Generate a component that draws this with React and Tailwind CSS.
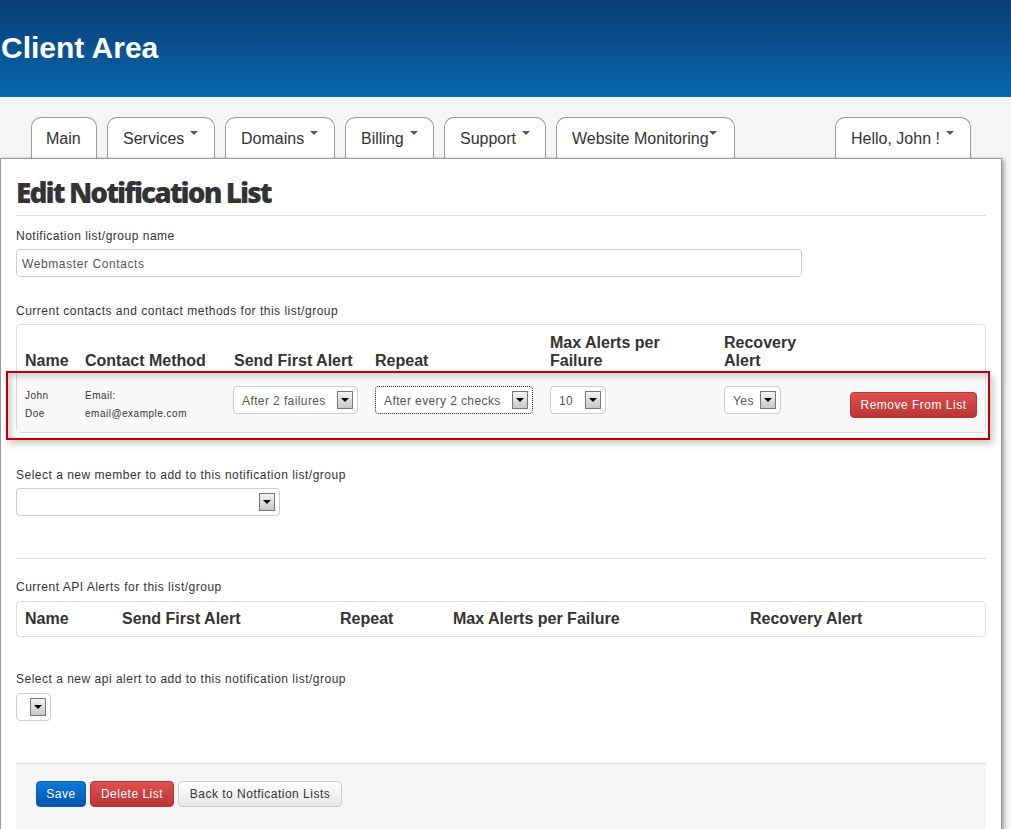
import React from "react";

const tabs = [
  { label: "Main", width: "w-[66px]", left: "pl-[14px]" },
  { label: "Services", width: "w-[108px]", left: "pl-[15px]", caret: "ml-[6px]" },
  { label: "Domains", width: "w-[110px]", left: "pl-[15px]", caret: "ml-[6px]" },
  { label: "Billing", width: "w-[89px]", left: "pl-[15px]", caret: "ml-[6px]" },
  { label: "Support", width: "w-[102px]", left: "pl-[15px]", caret: "ml-[6px]" },
  { label: "Website Monitoring", width: "w-[179px]", left: "pl-[15px]", caret: "ml-0" },
];

function Tab({ label, width, left, caret }) {
  return (
    <a className={`flex h-[41px] items-start rounded-t-[10px] border border-b-0 border-[#999] bg-white pt-[10px] text-base leading-[22px] text-[#333] ${width} ${left}`}>
      <span className="whitespace-nowrap">{label}</span>
      {caret ? (
        <span className={`mt-[3px] h-0 w-0 border-x-4 border-t-4 border-x-transparent border-t-[#555] ${caret}`} />
      ) : null}
    </a>
  );
}

function FakeSelect({ value, width, className = "", dotted = false }) {
  return (
    <div className={`relative h-[28px] rounded-[4px] border bg-white pl-[8px] text-xs leading-[28px] tracking-[0.4px] text-[#555] ${dotted ? "border-dotted border-[#222]" : "border-[#ccc]"} ${width} ${className}`}>
      <span className="whitespace-nowrap">{value}</span>
      <span className="absolute right-[4px] top-[4px] flex h-[18px] w-[16px] items-center justify-center border border-[#777] bg-gradient-to-b from-[#f3f3f3] to-[#c8c8c8]">
        <span className="h-0 w-0 border-x-4 border-t-[4px] border-x-transparent border-t-black" />
      </span>
    </div>
  );
}

function Label({ children, className = "" }) {
  return <div className={`text-xs leading-[18px] tracking-[0.5px] text-[#333] ${className}`}>{children}</div>;
}

function Button({ children, className }) {
  return (
    <button className={`h-[26px] rounded-[4px] border text-xs tracking-[0.5px] ${className}`}>{children}</button>
  );
}

export default function App() {
  return (
    <div className="h-[829px] w-[1011px] overflow-hidden bg-[#f5f5f5] font-['Liberation_Sans',Arial,sans-serif]">
      <header className="h-[97px] bg-gradient-to-b from-[#0a3d76] to-[#0668ac] pl-px pt-[30px]">
        <h1 className="text-[30px] font-bold leading-[36px] text-white">Client Area</h1>
      </header>

      <nav className="flex h-[61px] items-end pl-[31px] pr-[40px]">
        <div className="flex gap-[10px]">
          {tabs.map((tab) => (
            <Tab key={tab.label} {...tab} />
          ))}
        </div>
        <div className="ml-auto">
          <Tab label="Hello, John !" width="w-[136px]" left="pl-[15px]" caret="ml-[6px]" />
        </div>
      </nav>

      <main className="relative h-[680px] w-[1002px] border border-[#999] bg-white px-[15px] shadow-[2px_1px_4px_rgba(0,0,0,0.35)]">
        <div className="border-b border-[#ddd] pb-[5px] pt-[15px]">
          <h2 className="font-['Open_Sans',sans-serif] text-[28px] font-extrabold leading-[36px] tracking-[-1.95px] text-[#333]">Edit Notification List</h2>
        </div>

        <Label className="mt-[11px]">Notification list/group name</Label>
        <input
          readOnly
          value="Webmaster Contacts"
          className="mt-[4px] block h-[28px] w-[786px] rounded-[4px] border border-[#ccc] px-[5px] pt-px text-xs tracking-[0.6px] text-[#555] outline-none"
        />

        <Label className="mt-[25px]">Current contacts and contact methods for this list/group</Label>

        <div className="relative mt-[4px] w-[970px] rounded-[4px] border border-[#ddd]">
          <table className="w-full table-fixed border-collapse text-left text-[#333]">
            <colgroup>
              <col className="w-[60px]" />
              <col className="w-[149px]" />
              <col className="w-[141px]" />
              <col className="w-[175px]" />
              <col className="w-[174px]" />
              <col className="w-[110px]" />
              <col />
            </colgroup>
            <thead>
              <tr className="h-[52px] align-bottom text-base font-bold leading-[18px]">
                <th className="pb-[7px] pl-[8px]">Name</th>
                <th className="pb-[7px] pl-[8px]">Contact Method</th>
                <th className="pb-[7px] pl-[8px]">Send First Alert</th>
                <th className="pb-[7px] pl-[8px]">Repeat</th>
                <th className="pb-[7px] pl-[8px]">Max Alerts per Failure</th>
                <th className="pb-[7px] pl-[8px]">Recovery Alert</th>
                <th />
              </tr>
            </thead>
            <tbody>
              <tr className="h-[55px] bg-[#f9f9f9] align-top text-[10px] leading-[18px] tracking-[0.5px]">
                <td className="pl-[8px] pt-[10px]">
                  John
                  <br />
                  Doe
                </td>
                <td className="pl-[8px] pt-[10px]">
                  Email:
                  <br />
                  email@example.com
                </td>
                <td className="pl-[8px] pt-[9px]">
                  <FakeSelect value="After 2 failures" width="w-[125px]" className="-ml-px" />
                </td>
                <td className="pl-[8px] pt-[9px]">
                  <FakeSelect value="After every 2 checks" width="w-[158px]" dotted />
                </td>
                <td className="pl-[8px] pt-[9px]">
                  <FakeSelect value="10" width="w-[56px]" />
                </td>
                <td className="pl-[8px] pt-[9px]">
                  <FakeSelect value="Yes" width="w-[57px]" />
                </td>
                <td className="pr-[8px] pt-[15px] text-right">
                  <Button className="w-[127px] border-[#b33] bg-gradient-to-b from-[#e05050] to-[#b93434] text-white">
                    Remove From List
                  </Button>
                </td>
              </tr>
            </tbody>
          </table>

          {/* red annotation drawn over the row in the screenshot */}
          <div className="pointer-events-none absolute bottom-[-8px] left-[-11px] right-[-5px] top-[46px] border-2 border-[#c00000] shadow-[3px_4px_7px_rgba(0,0,0,0.22),inset_3px_3px_7px_rgba(0,0,0,0.22)]" />
        </div>

        <Label className="mt-[33px]">Select a new member to add to this notification list/group</Label>
        <div className="mt-[4px]">
          <FakeSelect value="" width="w-[264px]" />
        </div>

        <div className="mt-[42px] border-t border-[#ddd]" />

        <Label className="mt-[19px]">Current API Alerts for this list/group</Label>
        <div className="mt-[5px] flex h-[36px] w-[970px] items-center rounded-[4px] border border-[#ddd] text-base font-bold text-[#333]">
          <span className="ml-[8px] w-[97px]">Name</span>
          <span className="w-[218px]">Send First Alert</span>
          <span className="w-[113px]">Repeat</span>
          <span className="w-[297px]">Max Alerts per Failure</span>
          <span>Recovery Alert</span>
        </div>

        <Label className="mt-[33px]">Select a new api alert to add to this notification list/group</Label>
        <div className="mt-[5px]">
          <FakeSelect value="" width="w-[35px]" />
        </div>

        <div className="mt-[42px] flex h-[70px] w-[970px] items-start gap-[4px] border-t border-[#ddd] bg-[#f5f5f5] pl-[20px] pt-[17px]">
          <Button className="w-[50px] border-[#0a5fb0] bg-gradient-to-b from-[#0a78d8] to-[#0556b0] text-white">Save</Button>
          <Button className="w-[84px] border-[#b33] bg-gradient-to-b from-[#e05050] to-[#b93434] text-white">Delete List</Button>
          <Button className="w-[164px] border-[#ccc] bg-gradient-to-b from-white to-[#e6e6e6] text-[#333]">Back to Notfication Lists</Button>
        </div>
      </main>
    </div>
  );
}
